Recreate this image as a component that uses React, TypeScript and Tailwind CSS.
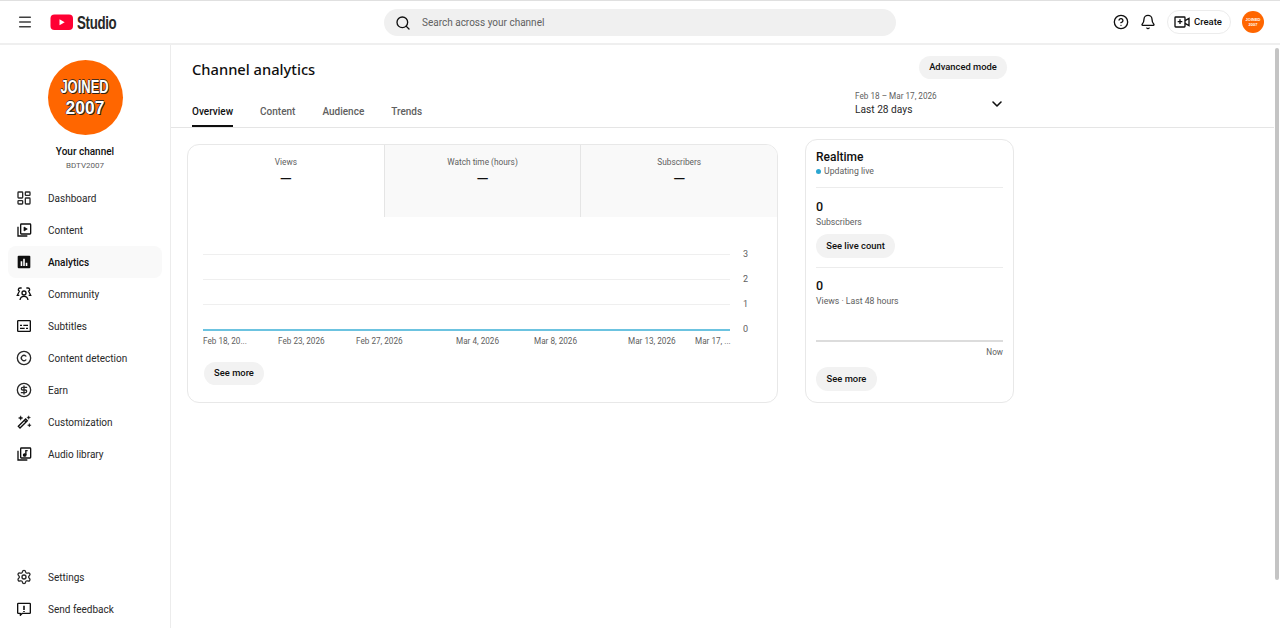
import { Bell, ChevronDown, CircleDollarSign, CircleHelp, Copyright, LayoutDashboard, Menu, Search, Settings } from 'lucide-react';
import type { ReactNode } from 'react';

const ic = { width: 16, height: 16, viewBox: '0 0 24 24', fill: 'none', stroke: '#0f0f0f', strokeWidth: 2 };

function ContentIcon() {
  return (
    <svg {...ic}>
      <rect x="7" y="3" width="15" height="15" rx="1" />
      <path d="M3 7v14h14" />
      <path d="M12 7.500v6l5-3z" fill="#0f0f0f" strokeWidth="1" />
    </svg>
  );
}

function AnalyticsIcon() {
  return (
    <svg width="16" height="16" viewBox="0 0 24 24">
      <rect x="2.500" y="2.500" width="19" height="19" rx="1.500" fill="#0f0f0f" />
      <path d="M7 11h2.400v7H7zM10.800 7h2.400v11h-2.400zM14.600 13H17v5h-2.400z" fill="#fff" />
    </svg>
  );
}

function CommunityIcon() {
  return (
    <svg {...ic}>
      <circle cx="12" cy="10.500" r="3" />
      <path d="M6 21c.5-3.600 2.800-5.500 6-5.500s5.500 1.900 6 5.500" />
      <path d="M8.500 3H6a2.500 2.500 0 0 0-1 4.800L2 14h3M15.500 3H18a2.500 2.500 0 0 1 1 4.800l3 6.200h-3" />
    </svg>
  );
}

function SubtitlesIcon() {
  return (
    <svg {...ic}>
      <rect x="2.500" y="4" width="19" height="16" rx="1" />
      <path d="M6 11h3M11 11h7M6 15.500h7M15 15.500h3" />
    </svg>
  );
}

function WandIcon() {
  return (
    <svg {...ic}>
      <path d="M3.500 18.500L14.500 7.500l2.500 2.500L6 21z" />
      <path d="M12.500 9.500l2.500 2.500" />
      <path d="M7 2.500l1 2.500 2.500 1-2.500 1-1 2.500-1-2.500-2.500-1 2.500-1zM19 2.500l.8 2 2 .8-2 .8-.8 2-.8-2-2-.8 2-.8zM20 14l.8 2 2 .8-2 .8-.8 2-.8-2-2-.8 2-.8z" fill="#0f0f0f" strokeWidth="0.500" />
    </svg>
  );
}

function AudioIcon() {
  return (
    <svg {...ic}>
      <rect x="7" y="3" width="15" height="15" rx="1" />
      <path d="M3 7v14h14" />
      <circle cx="13" cy="13.500" r="1.800" fill="#0f0f0f" />
      <path d="M14.800 13.500V7h2.700" />
    </svg>
  );
}

function FeedbackIcon() {
  return (
    <svg {...ic} strokeLinejoin="round">
      <path d="M2.500 4.500a1 1 0 0 1 1-1h17a1 1 0 0 1 1 1v13a1 1 0 0 1-1 1H9.500l-3 3v-3h-3a1 1 0 0 1-1-1z" />
      <path d="M12 7v6.500M12 15v1.500" strokeWidth="2.400" />
    </svg>
  );
}

function CreateIcon() {
  return (
    <svg width="16" height="16" viewBox="0 0 24 24" fill="none" stroke="#0f0f0f" strokeWidth="2">
      <rect x="1.500" y="4.500" width="15" height="15" rx="1" />
      <path d="M9 8v7M5.500 11.500h7" />
      <path d="M16.500 10l6-3.500v11l-6-3.500" />
    </svg>
  );
}

function Avatar({ small }: { small?: boolean }) {
  if (small) {
    return (
      <div className="flex h-[22px] w-[22px] flex-col items-center justify-center rounded-full bg-[#ff6600] font-['Liberation_Sans',sans-serif] text-[4px] font-bold leading-[5px] text-white">
        <span>JOINED</span>
        <span>2007</span>
      </div>
    );
  }
  return (
    <div className="flex h-[75px] w-[75px] flex-col items-center justify-center rounded-full bg-[#ff6600] font-['Liberation_Sans',sans-serif] text-[18px] font-bold leading-[21px] text-white [text-shadow:1px_1px_0_#2a2018,-1px_0_0_#4a3020,0_-1px_0_#4a3020]">
      <span className="scale-x-[0.72]">JOINED</span>
      <span className="scale-x-[0.97]">2007</span>
    </div>
  );
}

function NavItem({ icon, label, active }: { icon: ReactNode; label: string; active?: boolean }) {
  return (
    <div className={`mx-2 flex h-8 w-[154px] items-center gap-[16px] rounded-lg pl-2 ${active ? 'bg-[#f9f9f9] font-medium text-[#0f0f0f]' : 'text-[#282828]'}`}>
      <span className="flex w-4 justify-center">{icon}</span>
      <span className="text-[10px]">{label}</span>
    </div>
  );
}

function Pill({ children, className }: { children: ReactNode; className: string }) {
  return (
    <div className={`flex items-center justify-center rounded-full bg-[#f2f2f2] text-[9.400px] font-medium text-[#0f0f0f] ${className}`}>
      {children}
    </div>
  );
}

function Metric({ label, active }: { label: string; active?: boolean }) {
  return (
    <div className={`flex flex-col items-center pt-[11px] ${active ? 'w-[196px]' : 'w-[197px] border-l border-[#e5e5e5] bg-[#f9f9f9]'}`}>
      <span className="text-[8.300px] leading-[12px] text-[#606060]">{label}</span>
      <span className="mt-[3px] text-[16px] leading-[18px] text-[#0f0f0f]">—</span>
    </div>
  );
}

function GridRow({ value, blue }: { value: number; blue?: boolean }) {
  return (
    <div className="flex h-[25.200px] items-center">
      <div className={`w-[527px] ${blue ? 'h-[2px] bg-[#6cc3e0]' : 'h-px bg-[#efefef]'}`} />
      <span className="ml-[13px] text-[9px] text-[#606060]">{value}</span>
    </div>
  );
}

const xLabels = [
  { text: 'Feb 18, 20...', width: 'w-[75px]' },
  { text: 'Feb 23, 2026', width: 'w-[78px]' },
  { text: 'Feb 27, 2026', width: 'w-[100px]' },
  { text: 'Mar 4, 2026', width: 'w-[78px]' },
  { text: 'Mar 8, 2026', width: 'w-[94px]' },
  { text: 'Mar 13, 2026', width: 'w-[67px]' },
  { text: 'Mar 17, ...', width: 'w-[40px]' },
];

export default function App() {
  return (
    <div className="flex h-[628px] w-[1280px] flex-col overflow-hidden border-t border-[#e0e0e0] bg-white font-['Roboto',sans-serif] text-[#0f0f0f]">
      <header className="flex h-[44px] shrink-0 items-center border-b-2 border-[#efefef] pr-[15px]">
        <Menu size={16} strokeWidth={2.200} color="#3f3f3f" className="ml-[17px]" />
        <svg width="24" height="17" viewBox="0 0 24 17" className="ml-[17px]">
          <rect x="0.500" y="0.500" width="22.500" height="15.500" rx="4" fill="#ff0033" />
          <path d="M9.500 5.200v6.100l5.200-3z" fill="#fff" />
        </svg>
        <span className="ml-[3px] w-[39px] origin-left scale-x-[0.7] whitespace-nowrap font-['Liberation_Sans',sans-serif] text-[19px] font-bold leading-none tracking-tight text-[#282828]">Studio</span>
        <div className="ml-[268px] mt-px flex h-[27px] w-[512px] items-center rounded-full bg-[#f0f0f0] pl-[11px]">
          <Search size={16} strokeWidth={2} color="#0f0f0f" />
          <span className="ml-[11px] text-[10px] text-[#606060]">Search across your channel</span>
        </div>
        <CircleHelp size={16} strokeWidth={2} className="ml-[217px]" />
        <Bell size={16} strokeWidth={2} className="ml-[11px]" />
        <div className="ml-[11px] flex h-[24px] w-[64px] items-center gap-[4px] rounded-full border border-[#ececec] pl-[6px] text-[9.500px] font-medium">
          <CreateIcon />
          <span>Create</span>
        </div>
        <div className="ml-[11px]">
          <Avatar small />
        </div>
      </header>

      <div className="flex min-h-0 flex-1">
        <aside className="flex w-[171px] shrink-0 flex-col border-r border-[#ececec]">
          <div className="mt-[15px] flex flex-col items-center">
            <Avatar />
            <span className="mt-[10px] text-[10px] font-medium leading-[14px] text-[#0f0f0f]">Your channel</span>
            <span className="mt-[1px] text-[8px] leading-[12px] text-[#606060]">BDTV2007</span>
          </div>
          <nav className="mt-[10px] flex flex-col">
            <NavItem icon={<LayoutDashboard size={16} strokeWidth={2} />} label="Dashboard" />
            <NavItem icon={<ContentIcon />} label="Content" />
            <NavItem icon={<AnalyticsIcon />} label="Analytics" active />
            <NavItem icon={<CommunityIcon />} label="Community" />
            <NavItem icon={<SubtitlesIcon />} label="Subtitles" />
            <NavItem icon={<Copyright size={16} strokeWidth={2} />} label="Content detection" />
            <NavItem icon={<CircleDollarSign size={16} strokeWidth={2} />} label="Earn" />
            <NavItem icon={<WandIcon />} label="Customization" />
            <NavItem icon={<AudioIcon />} label="Audio library" />
          </nav>
          <div className="mt-auto mb-[3px] flex flex-col">
            <NavItem icon={<Settings size={16} strokeWidth={2} />} label="Settings" />
            <NavItem icon={<FeedbackIcon />} label="Send feedback" />
          </div>
        </aside>

        <main className="flex min-w-0 flex-1 flex-col">
          <div className="h-[83px] shrink-0 border-b border-[#e5e5e5] pl-[21px]">
            <div className="flex h-[34px] w-[815px] items-start justify-between pt-[11px]">
              <h1 className="mt-[2px] font-['Noto_Sans',sans-serif] text-[14.700px] font-medium leading-[23px] text-[#0f0f0f]">Channel analytics</h1>
              <Pill className="h-[23px] w-[88px]">Advanced mode</Pill>
            </div>
            <div className="mt-[11px] flex h-[37px] w-[815px] items-end justify-between">
              <div className="flex gap-[27px] text-[10px] font-medium leading-[14px] text-[#606060]">
                <span className="border-b-2 border-[#0f0f0f] pb-[6px] text-[#0f0f0f]">Overview</span>
                <span className="pb-[8px]">Content</span>
                <span className="pb-[8px]">Audience</span>
                <span className="pb-[8px]">Trends</span>
              </div>
              <div className="flex w-[152px] items-center justify-between self-start pr-[2px]">
                <div className="flex flex-col">
                  <span className="text-[8.200px] leading-[12px] text-[#606060]">Feb 18 – Mar 17, 2026</span>
                  <span className="mt-px text-[10.200px] leading-[14px] text-[#282828]">Last 28 days</span>
                </div>
                <ChevronDown size={16} strokeWidth={2.400} className="mt-[1px]" />
              </div>
            </div>
          </div>

          <div className="flex items-start gap-[27px] pl-[16px]">
            <section className="mt-[16px] h-[259px] w-[591px] overflow-hidden rounded-xl border border-[#e8e8e8]">
              <div className="flex h-[72px]">
                <Metric label="Views" active />
                <Metric label="Watch time (hours)" />
                <Metric label="Subscribers" />
              </div>
              <div className="pl-[15px] pt-[25px]">
                <GridRow value={3} />
                <GridRow value={2} />
                <GridRow value={1} />
                <GridRow value={0} blue />
                <div className="-mt-[8px] flex text-[8.200px] leading-[12px] text-[#606060]">
                  {xLabels.map((l) => (
                    <span key={l.text} className={`${l.width} whitespace-nowrap`}>{l.text}</span>
                  ))}
                </div>
                <Pill className="ml-px mt-[15px] h-[23px] w-[60px]">See more</Pill>
              </div>
            </section>

            <section className="mt-[11px] h-[264px] w-[209px] rounded-xl border border-[#e8e8e8] px-[10px] pt-[9px]">
              <div className="text-[12px] font-medium leading-[16px]">Realtime</div>
              <div className="flex items-center gap-[3px] text-[8.700px] leading-[12px] text-[#606060]">
                <span className="h-[5px] w-[5px] rounded-full bg-[#2ba6d1]" />
                Updating live
              </div>
              <div className="mt-[10px] h-px bg-[#ececec]" />
              <div className="mt-[11px] text-[12.500px] font-medium leading-[16px]">0</div>
              <div className="mt-[1px] text-[8.700px] leading-[12px] text-[#606060]">Subscribers</div>
              <Pill className="mt-[6px] h-[24px] w-[79px]">See live count</Pill>
              <div className="mt-[9px] h-px bg-[#ececec]" />
              <div className="mt-[10px] text-[12.500px] font-medium leading-[16px]">0</div>
              <div className="mt-[1px] text-[8.700px] leading-[12px] text-[#606060]">Views · Last 48 hours</div>
              <div className="mt-[33px] h-[2px] bg-[#dcdcdc]" />
              <div className="mt-[4px] text-right text-[8.200px] leading-[12px] text-[#606060]">Now</div>
              <Pill className="mt-[9px] h-[24px] w-[61px]">See more</Pill>
            </section>
          </div>
        </main>

        <div className="w-[6px] shrink-0 bg-white pt-[3px]">
          <div className="ml-[1px] h-[532px] w-[4px] rounded-sm bg-[#c4c4c4]" />
        </div>
      </div>
    </div>
  );
}
